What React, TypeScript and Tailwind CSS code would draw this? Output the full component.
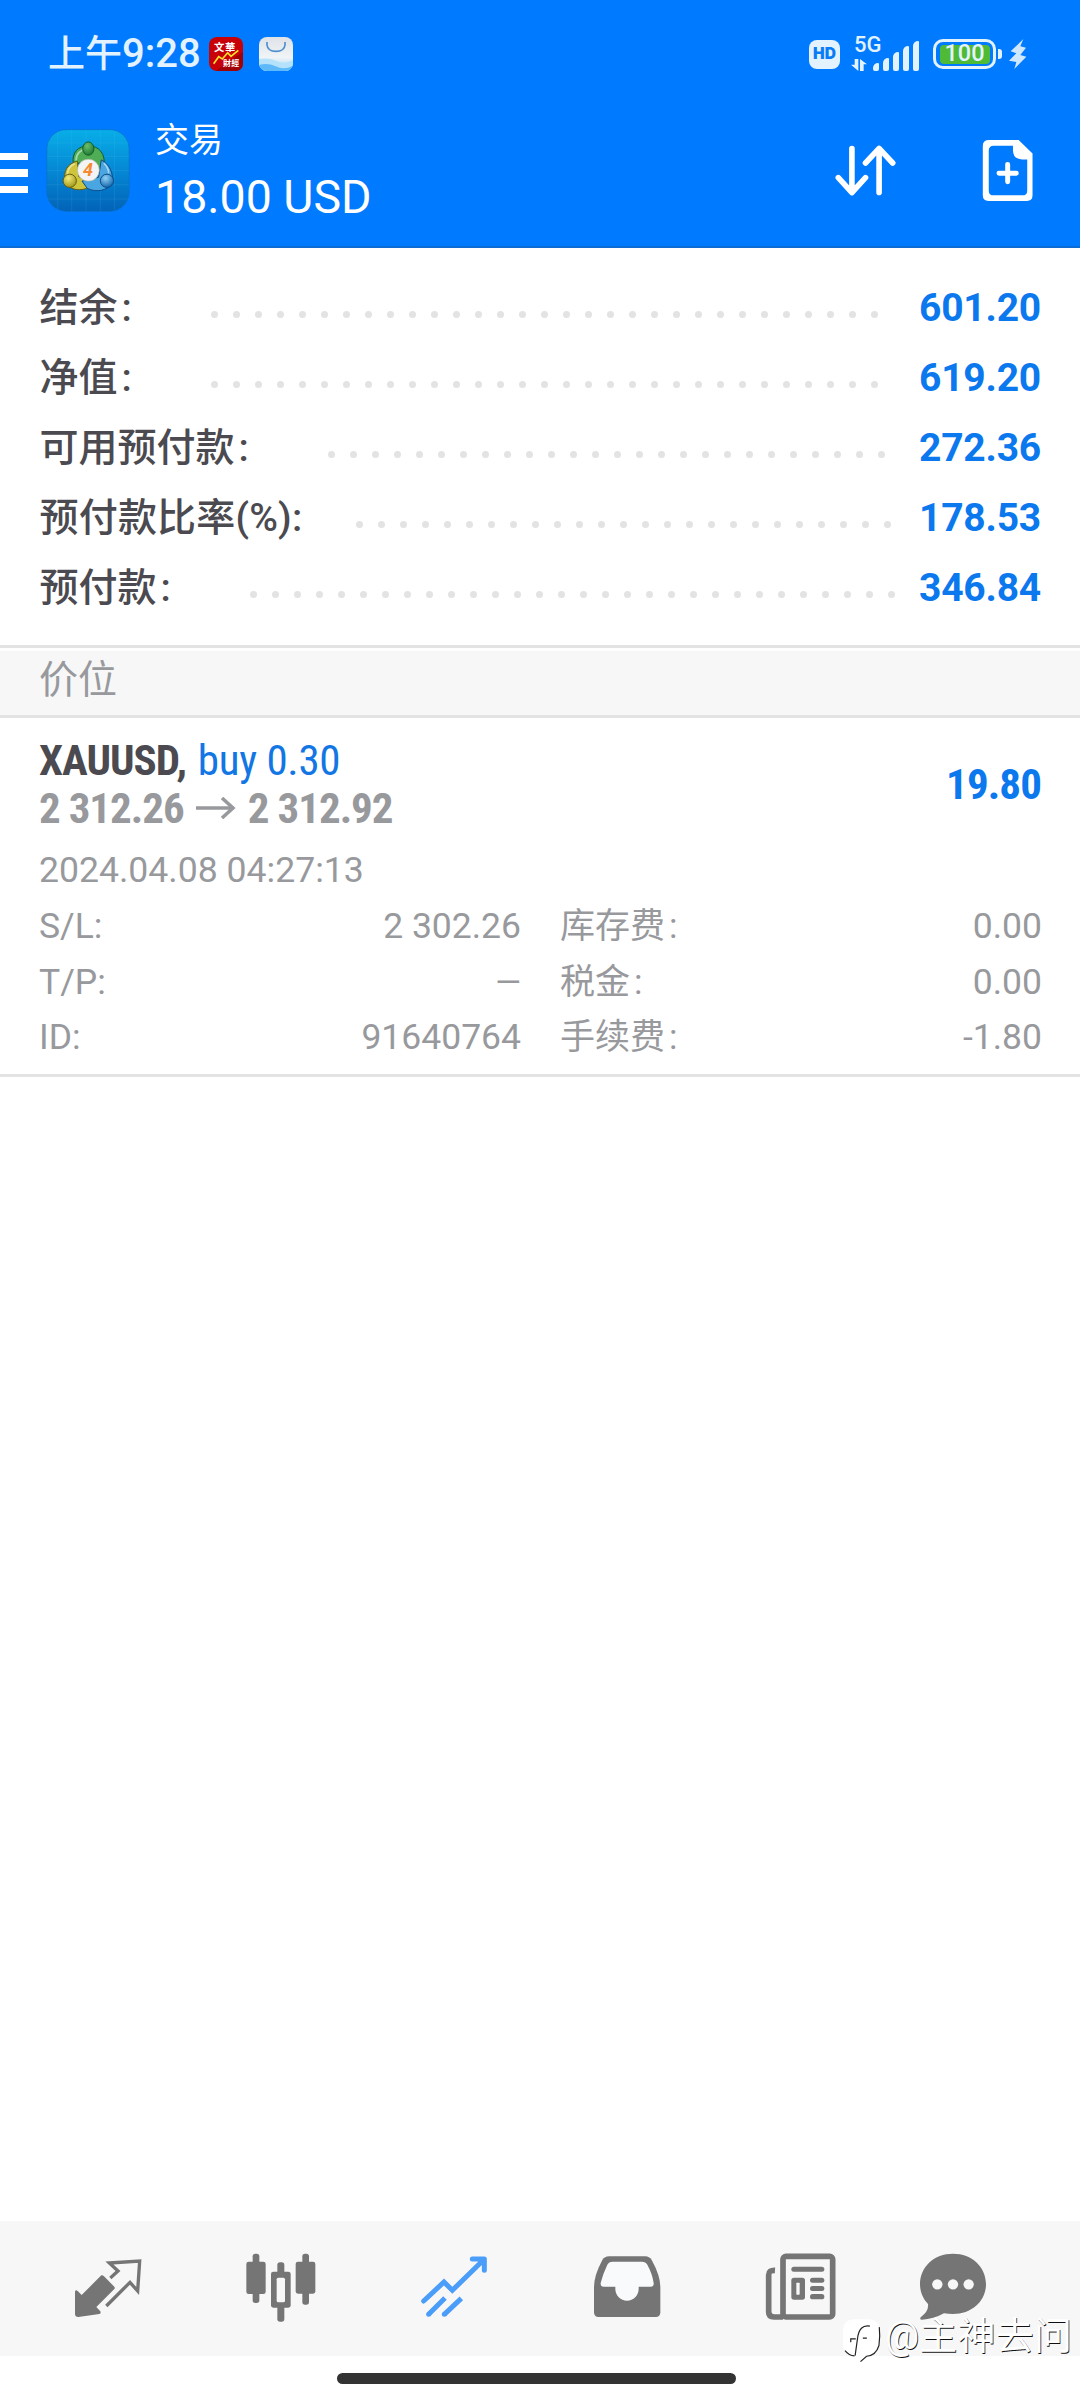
import type { ReactNode } from "react";
import clsx from "clsx";

const SUMMARY = [
  { label: "结余：", value: "601.20", dots: 31 },
  { label: "净值：", value: "619.20", dots: 31 },
  { label: "可用预付款：", value: "272.36", dots: 26 },
  { label: "预付款比率(%):", value: "178.53", dots: 25 },
  { label: "预付款：", value: "346.84", dots: 30 },
];

const DETAILS = [
  ["S/L:", "2 302.26", "库存费：", "0.00"],
  ["T/P:", "—", "税金：", "0.00"],
  ["ID:", "91640764", "手续费：", "-1.80"],
];

const SIGNAL_BARS = ["h-2", "h-[13px]", "h-[19px]", "h-[25px]", "h-[30px]"];

function QuotesIcon() {
  return (
    <svg viewBox="205 145 240 240" className="size-20" fill="#757575">
      <path d="M305 227Q309 226 313 230L344 261Q347 265 344 268L290 322L302 335Q305 341 299 343L236 352Q226 352 226 343V276Q228 269 234 274L246 286Z" />
      <path
        d="M332 235L355 214L329 190L420 184L414 274L391 248L320 319"
        fill="none"
        stroke="#757575"
        strokeWidth="10"
      />
    </svg>
  );
}

function ChartIcon() {
  return (
    <svg viewBox="724 145 240 240" className="size-20" fill="#757575">
      <rect x="759" y="162" width="20" height="148" rx="8" />
      <rect x="740" y="186" width="58" height="97" rx="7" />
      <rect x="908" y="162" width="20" height="153" rx="8" />
      <rect x="888" y="186" width="59" height="96" rx="7" />
      <rect x="833" y="188" width="21" height="178" rx="8" />
      <rect x="814" y="216" width="59" height="108" rx="7" />
      <rect x="831" y="234" width="25" height="74" rx="5" fill="#f7f7f7" />
    </svg>
  );
}

function TradeIcon() {
  return (
    <svg
      viewBox="162 145 240 240"
      className="size-20"
      fill="none"
      stroke="#4a9df8"
      strokeWidth="15"
    >
      <path d="M191 304L252 247L277 272L368 183" strokeLinecap="round" strokeLinejoin="miter" />
      <path d="M337 178H373V212" strokeLinecap="round" strokeLinejoin="round" />
      <path d="M347 178H373V204Z" fill="#4a9df8" stroke="none" />
      <path d="M255 295L206 344M304 296L253 344" />
      <circle cx="206" cy="344" r="7.5" fill="#4a9df8" stroke="none" />
      <circle cx="253" cy="344" r="7.5" fill="#4a9df8" stroke="none" />
    </svg>
  );
}

function HistoryIcon() {
  return (
    <svg viewBox="682 145 240 240" className="size-20">
      <path
        fill="#757575"
        d="M748 170H857Q869 170 876 181Q902 228 902 262V338Q902 352 888 352H717Q703 352 703 338V262Q703 228 728 181Q735 170 748 170Z"
      />
      <path
        fill="#f9fafb"
        d="M758 186H847Q858 186 863 195Q878 222 882 250Q883 261 873 261H837V268A34 34 0 0 1 767 268V261H732Q722 261 723 250Q730 222 743 195Q748 186 758 186Z"
      />
    </svg>
  );
}

function NewsIcon() {
  return (
    <svg viewBox="121 145 240 240" className="size-20" fill="#757575">
      <path
        d="M190 352H163Q147 352 147 337V226Q147 211 166 212"
        fill="none"
        stroke="#757575"
        strokeWidth="17"
      />
      <rect x="190" y="170" width="149" height="182" rx="9" fill="#f7f7f7" stroke="#757575" strokeWidth="17" />
      <rect x="215" y="201" width="99" height="15" rx="7.5" />
      <rect x="215" y="234" width="41" height="66" rx="8" />
      <rect x="230" y="249" width="10" height="36" rx="2" fill="#f7f7f7" />
      <rect x="271" y="234" width="43" height="15" rx="7.5" />
      <rect x="271" y="259" width="43" height="15" rx="7.5" />
      <rect x="271" y="283" width="43" height="16" rx="8" />
    </svg>
  );
}

function ChatIcon() {
  return (
    <svg viewBox="576 145 240 240" className="size-20" fill="#757575">
      <path d="M699 162C756 162 798 202 798 253C798 304 756 343 699 343Q685 343 672 341Q640 359 606 360Q598 360 602 353Q627 334 624 313C609 297 600 277 600 253C600 202 642 162 699 162Z" />
      <circle cx="652" cy="254" r="15.5" fill="#f7f7f7" />
      <circle cx="699" cy="254" r="15.5" fill="#f7f7f7" />
      <circle cx="746" cy="254" r="15.5" fill="#f7f7f7" />
    </svg>
  );
}

function AppLogo() {
  return (
    <svg viewBox="48 43 252 250" className="h-[83px] w-[84px]">
      <defs>
        <linearGradient id="logoBg" x1="0" y1="0" x2="0" y2="1">
          <stop offset="0" stopColor="#08aee8" />
          <stop offset="0.5" stopColor="#0588d4" />
          <stop offset="1" stopColor="#0263b8" />
        </linearGradient>
        <radialGradient id="green" cx="0.4" cy="0.3" r="0.7">
          <stop offset="0" stopColor="#6cc06c" />
          <stop offset="1" stopColor="#1f7a34" />
        </radialGradient>
        <radialGradient id="yellow" cx="0.4" cy="0.3" r="0.7">
          <stop offset="0" stopColor="#f3ea7a" />
          <stop offset="1" stopColor="#a5991a" />
        </radialGradient>
        <radialGradient id="blue" cx="0.4" cy="0.3" r="0.7">
          <stop offset="0" stopColor="#8fd2f7" />
          <stop offset="1" stopColor="#1668ad" />
        </radialGradient>
      </defs>
      <rect x="50" y="45" width="248" height="246" rx="58" fill="url(#logoBg)" stroke="#0a6fc4" strokeWidth="2" />
      <path
        d="M83 50V286M125 45V291M168 45V291M211 45V291M254 50V286M50 85H298M50 126H298M50 168H298M50 211H298M50 254H298"
        stroke="#5cc4f0"
        strokeOpacity="0.22"
        strokeWidth="2"
      />
      <path d="M130 148C124 112 146 94 175 94C207 94 228 116 222 158L204 176L190 140Z" fill="#4fae55" stroke="#145c2a" strokeWidth="3" />
      <path d="M142 140C112 146 98 172 106 200C112 222 140 232 170 222L176 206L146 186Z" fill="#cfc53a" stroke="#635d10" strokeWidth="3" />
      <path d="M214 136C240 150 252 178 246 206C234 228 200 236 172 222L156 200L206 188Z" fill="#4aa6e0" stroke="#0c4a86" strokeWidth="3" />
      <path d="M138 138C138 118 152 104 170 104M112 184C112 166 120 154 134 148M236 176C236 164 230 154 222 146" fill="none" stroke="#fff" strokeOpacity="0.5" strokeWidth="5" />
      <ellipse cx="175" cy="102" rx="17" ry="20" fill="url(#green)" stroke="#145c2a" strokeWidth="3" />
      <circle cx="119" cy="199" r="20" fill="url(#yellow)" stroke="#635d10" strokeWidth="3" />
      <circle cx="231" cy="199" r="20" fill="url(#blue)" stroke="#0c4a86" strokeWidth="3" />
      <circle cx="175" cy="167" r="33" fill="#f2f4f5" stroke="#b9b9a8" strokeWidth="2" />
      <text x="174" y="186" textAnchor="middle" fontSize="54" fontWeight="700" fontStyle="italic" fill="#f58a2e">
        4
      </text>
    </svg>
  );
}

function StatusBar() {
  return (
    <div className="flex h-[108px] items-center pl-12 pr-[53px] text-[#e2f3ff]">
      <span className="text-[37px] font-medium leading-[50px]">
        上午<span className="text-[40px]">9:28</span>
      </span>
      <svg viewBox="0 0 102 102" className="ml-2 size-[34px]">
        <rect width="102" height="102" rx="24" fill="#c80008" />
        <path d="M20 102L102 44V78Q102 102 78 102Z" fill="#a00006" />
        <text x="15" y="42" fontSize="31" fontWeight="700" fill="#fff" textLength="64">文華</text>
        <text x="42" y="86" fontSize="24" fontWeight="700" fill="#fff" textLength="49">財經</text>
        <path d="M14 80L29 59L40 66L56 47L66 58L88 40" fill="none" stroke="#ffe02a" strokeWidth="5" />
      </svg>
      <svg viewBox="0 0 102 102" className="ml-4 size-[34px]">
        <defs>
          <linearGradient id="bag" x1="0" y1="0" x2="0" y2="1">
            <stop offset="0" stopColor="#dfe3e8" />
            <stop offset="0.6" stopColor="#f0f4f6" />
            <stop offset="1" stopColor="#9fd8fb" />
          </linearGradient>
          <clipPath id="bagClip">
            <rect width="102" height="102" rx="24" />
          </clipPath>
        </defs>
        <g clipPath="url(#bagClip)">
          <rect width="102" height="102" fill="url(#bag)" />
          <path d="M0 66Q30 62 52 72T102 70V102H0Z" fill="#b4e2fa" />
          <path d="M0 84Q25 76 50 88T102 86V102H0Z" fill="#5db9f8" />
        </g>
        <path d="M24 15V24Q26 43 51 43T78 24V15" fill="none" stroke="#4f8fd0" strokeWidth="5" />
      </svg>

      <div className="ml-auto flex items-center">
        <span className="flex h-[29px] w-[31px] items-center justify-center rounded-[8px] bg-[#e2f3ff] font-['Inter',sans-serif] text-[15.5px] font-black leading-none text-[#0a7cf5]">
          HD
        </span>
        <div className="relative ml-[11px] flex h-[34px] w-[68px] items-end justify-end gap-1">
          <span className="absolute left-[3px] top-0 text-[22px] font-medium leading-[16px]">5G</span>
          <svg viewBox="0 0 48 36" className="absolute bottom-0 left-0 h-3 w-4" fill="#e2f3ff">
            <path d="M11 0H22V36L0 17H11ZM27 36V0L48 16H38V36Z" />
          </svg>
          {SIGNAL_BARS.map((height) => (
            <span
              key={height}
              className={clsx("w-1.5 rounded-b-[2px] rounded-tl-[5px] rounded-tr-[1px] bg-[#e2f3ff]", height)}
            />
          ))}
        </div>
        <div className="ml-[14px] flex h-[30px] w-[63px] items-center justify-center rounded-[10px] border-[3px] border-[#e2f3ff]">
          <span className="flex h-[19px] w-[50px] items-center justify-center rounded-[4px] bg-[#4fba35] text-[23.5px] font-medium leading-none">
            100
          </span>
        </div>
        <span className="ml-0.5 h-2.5 w-1 rounded-r-[3px] bg-[#e2f3ff]" />
        <svg viewBox="0 0 54 90" className="ml-[7px] h-[30px] w-[18px]" fill="#cfe8ff">
          <path d="M43 0L5 37L22 43L0 65L22 69L16 90L52 53L34 48L51 26L34 22Z" />
        </svg>
      </div>
    </div>
  );
}

function Header() {
  return (
    <header className="h-[248px] border-b-2 border-[#0c6cd6] bg-[#007aff]">
      <StatusBar />
      <div className="flex items-start text-white">
        <div className="mt-[44.5px] flex w-7 flex-col gap-[9px]">
          <span className="h-[7.5px] bg-white" />
          <span className="h-[7.5px] bg-white" />
          <span className="h-[7.5px] bg-white" />
        </div>
        <div className="ml-[18px] mt-[21px]">
          <AppLogo />
        </div>
        <div className="ml-[25px] mt-2">
          <div className="text-[34px] leading-[48px]">交易</div>
          <div className="mt-[3px] text-[46.5px] leading-[60px]">18.00 USD</div>
        </div>
        <svg
          viewBox="160 430 190 165"
          className="ml-auto mt-[35px] h-[55px] w-[63px]"
          fill="none"
          stroke="#fff"
          strokeWidth="17"
          strokeLinecap="round"
          strokeLinejoin="round"
        >
          <path d="M214 446V579M173 534L214 579L255 534M296 579V446M255 490L296 446L337 490" />
        </svg>
        <svg viewBox="607 418 156 190" className="ml-[85px] mr-[46px] mt-[31px] h-[63px] w-[52px]">
          <path
            fillRule="evenodd"
            fill="#fff"
            d="M628 421H717L759 462V588Q759 605 742 605H626Q609 605 609 588V438Q609 421 628 421ZM700 438H642Q627 438 627 453V573Q627 588 642 588H728Q743 588 743 573V480H727Q700 478 700 452Z"
          />
          <path d="M684 495V547M658 521H710" stroke="#fff" strokeWidth="15" strokeLinecap="round" />
        </svg>
      </div>
    </header>
  );
}

// a full-width colon takes one em but is drawn with the narrow square-dotted glyph
function Label({ text }: { text: string }) {
  if (!text.endsWith("：")) return <>{text}</>;
  return (
    <>
      {text.slice(0, -1)}
      <span className="inline-block w-[1em] pl-1">:</span>
    </>
  );
}

function Leader({ count }: { count: number }) {
  return (
    <span className="mt-[38px] flex gap-[15px]">
      {Array.from({ length: count }, (_, i) => (
        <span key={i} className="size-[7px] rounded-full bg-[#e3e3e3]" />
      ))}
    </span>
  );
}

function Summary() {
  return (
    <section className="pb-[22px] pl-[39.5px] pr-[39px] pt-[25px]">
      {SUMMARY.map((row) => (
        <div key={row.label} className="flex h-[70px] items-start text-[39px] leading-[70px]">
          <span
            className={clsx(
              "mr-[54px] font-medium text-[#4b4a50]",
              row.label.endsWith(":") && "tracking-[0.2px]"
            )}
          >
            <Label text={row.label} />
          </span>
          <Leader count={row.dots} />
          <span className="ml-auto font-bold tracking-[-0.2px] text-[#0b78ee]">{row.value}</span>
        </div>
      ))}
    </section>
  );
}

function Position() {
  return (
    <section className="border-b-[3px] border-[#e3e3e3] pb-[8.5px] pl-[39px] pr-[38px] pt-[18px]">
      <div className="flex justify-between">
        <div className="text-[43px] font-bold leading-[48px] tracking-[-1px] font-stretch-condensed">
          <div className="text-[#4b4a50]">
            XAUUSD,{" "}
            <span className="ml-[3px] font-normal tracking-[-0.3px] text-[#1276e4]">buy 0.30</span>
          </div>
          <div className="flex items-center text-[#98999d]">
            2 312.26
            <svg viewBox="0 0 40 22" className="mx-3 h-[22px] w-10" fill="none" stroke="#98999d" strokeWidth="3.5">
              <path d="M0 11H38M26 1L37 11L26 21" />
            </svg>
            2 312.92
          </div>
        </div>
        <div className="mt-6 pr-px text-[43px] font-bold leading-[48px] tracking-[-0.9px] text-[#0b78ee] font-stretch-condensed">
          19.80
        </div>
      </div>
      <div className="mt-[11px] h-14 text-[35.6px] leading-[55px] text-[#98999d]">2024.04.08 04:27:13</div>
      {DETAILS.map(([leftLabel, leftValue, rightLabel, rightValue]) => (
        <div
          key={leftLabel}
          className="grid h-[55.5px] grid-cols-2 gap-x-[39px] text-[35.5px] leading-[55px] text-[#98999d]"
        >
          <div className="flex justify-between">
            <span>{leftLabel}</span>
            <span className={leftValue === "—" ? "text-[33px]" : undefined}>{leftValue}</span>
          </div>
          <div className="flex justify-between">
            <span className="text-[35px]">
              <Label text={rightLabel} />
            </span>
            <span>{rightValue}</span>
          </div>
        </div>
      ))}
    </section>
  );
}

function NavItem({ children, last }: { children: ReactNode; last?: boolean }) {
  return (
    <button className={clsx("flex items-center justify-center pb-px", last ? "w-[132px]" : "w-[173px]")}>
      {children}
    </button>
  );
}

function BottomNav() {
  return (
    <nav className="relative flex h-[135px] bg-[#f7f7f7] pl-[21px]">
      <NavItem><QuotesIcon /></NavItem>
      <NavItem><ChartIcon /></NavItem>
      <NavItem><TradeIcon /></NavItem>
      <NavItem><HistoryIcon /></NavItem>
      <NavItem><NewsIcon /></NavItem>
      <NavItem last><ChatIcon /></NavItem>
      <div className="absolute left-[841px] top-[92px] flex items-start text-[38px] leading-[46px] text-white [text-shadow:0.8px_0.8px_0_#111]">
        <svg viewBox="360 355 125 140" className="mt-1 h-[47px] w-[42px]">
          <path d="M402 362H440Q476 362 476 398V430Q476 466 436 473L420 487L410 474Q366 470 366 432V398Q366 362 402 362Z" fill="#fff" />
          <path
            d="M446 382Q414 376 409 420L402 470M389 430V420H404M425 418H437M474 385Q477 410 473 440Q464 470 436 472L418 488M372 455Q384 470 400 471"
            fill="none"
            stroke="#222"
            strokeWidth="3.5"
          />
        </svg>
        <span className="ml-0.5 tracking-[0.2px]">@主神去问</span>
      </div>
    </nav>
  );
}

export default function App() {
  return (
    <div className="flex h-[2400px] w-[1080px] flex-col overflow-hidden bg-white font-['Roboto','Noto_Sans_CJK_SC',sans-serif]">
      <Header />
      <Summary />
      <div className="border-t-[3px] border-[#e3e3e3] pt-[3px]">
        <h2 className="h-[67px] border-b-[3px] border-[#e3e3e3] bg-[#f7f7f7] px-[39px] text-[39px] leading-[59px] text-[#98999d]">
          价位
        </h2>
      </div>
      <Position />
      <div className="flex-1" />
      <BottomNav />
      <div className="flex h-11 justify-center pt-[17px]">
        <span className="mr-2 h-[11px] w-[399px] rounded-full bg-[#333]" />
      </div>
    </div>
  );
}
